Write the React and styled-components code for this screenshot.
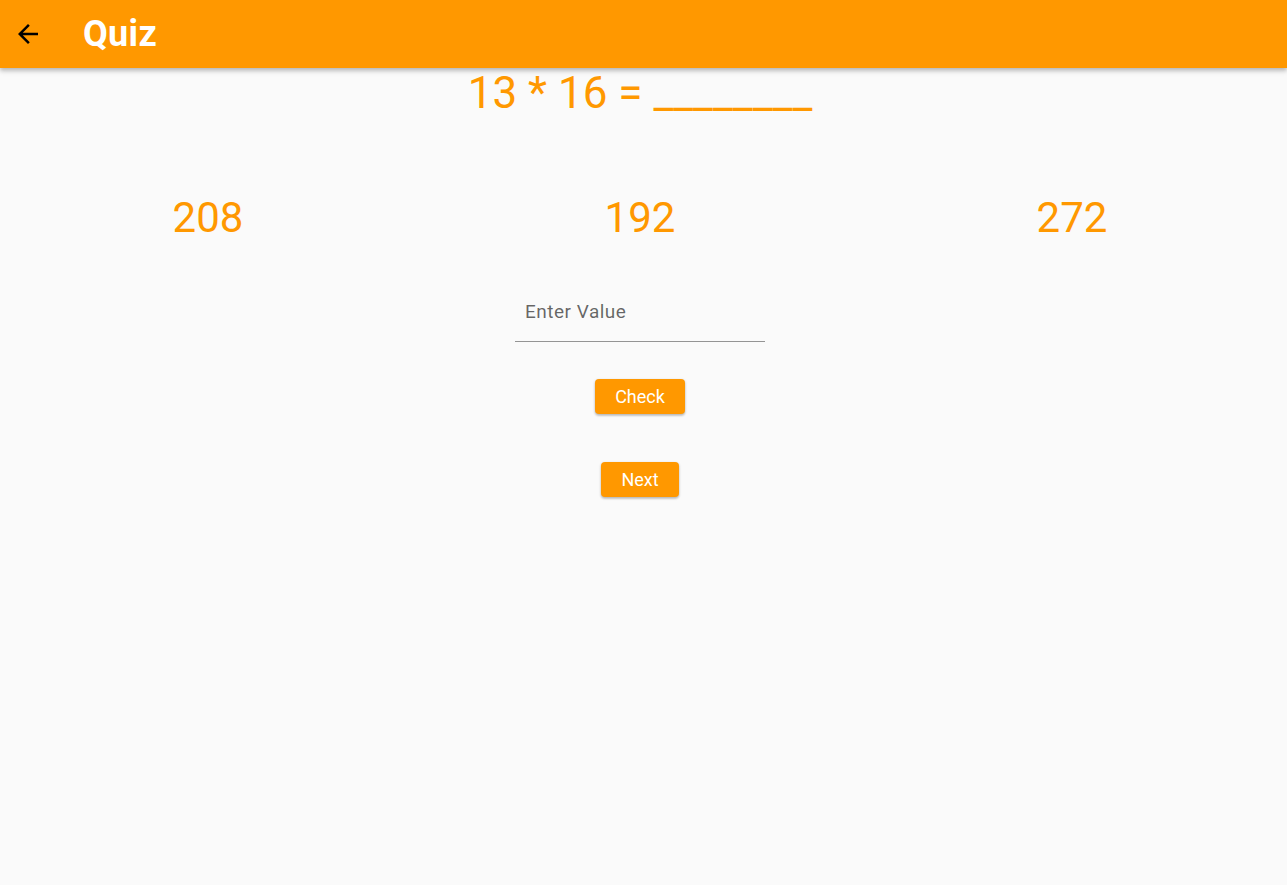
import React, { useState } from "react";
import styled, { createGlobalStyle } from "styled-components";

const GlobalStyle = createGlobalStyle`
  html, body {
    margin: 0;
    padding: 0;
    background: #fafafa;
    font-family: Roboto, "Noto Sans", Arial, sans-serif;
    overflow: hidden;
  }
`;

const ORANGE = "#ff9800";

const Page = styled.div`
  min-height: 100vh;
  background: #fafafa;
`;

const AppBar = styled.header`
  height: 68px;
  background: ${ORANGE};
  display: flex;
  align-items: center;
  box-shadow: 0 2px 4px rgba(0, 0, 0, 0.2), 0 4px 5px rgba(0, 0, 0, 0.1);
  position: relative;
  z-index: 1;
`;

const BackButton = styled.button`
  width: 30px;
  height: 30px;
  margin-left: 13px;
  padding: 0;
  border: none;
  background: transparent;
  display: flex;
  align-items: center;
  justify-content: center;
  cursor: pointer;
  svg {
    display: block;
  }
`;

const Title = styled.h1`
  margin: 0 0 0 40px;
  font-size: 36px;
  font-weight: 700;
  color: #fff;
  line-height: 1;
  letter-spacing: 0.3px;
`;

const Body = styled.main`
  padding-right: 7px;
  display: flex;
  flex-direction: column;
  align-items: center;
`;

const Question = styled.div`
  font-size: 44px;
  line-height: 51px;
  color: ${ORANGE};
  text-align: center;
`;

const Options = styled.div`
  width: 100%;
  margin-top: 75px;
  display: grid;
  grid-template-columns: repeat(3, 1fr);
  column-gap: 16px;
`;

const Option = styled.div`
  text-align: center;
  font-size: 42px;
  line-height: 47px;
  color: ${ORANGE};
`;

const Field = styled.input`
  margin-top: 60px;
  width: 250px;
  box-sizing: border-box;
  padding: 0 10px 18px;
  border: none;
  border-bottom: 1px solid #949494;
  background: transparent;
  font-family: inherit;
  font-size: 19px;
  line-height: 22px;
  letter-spacing: 0.5px;
  color: #222;
  outline: none;
  &::placeholder {
    color: rgba(0, 0, 0, 0.6);
  }
`;

const Button = styled.button`
  margin-top: ${({ $gap }) => $gap}px;
  height: 35px;
  padding: 0 20px;
  border: none;
  border-radius: 4px;
  background: ${ORANGE};
  color: #fff;
  font-family: inherit;
  font-size: 18px;
  font-weight: 400;
  cursor: pointer;
  box-shadow: 0 1px 3px rgba(0, 0, 0, 0.2), 0 2px 2px rgba(0, 0, 0, 0.12);
`;

function ArrowBack() {
  return (
    <svg width="30" height="30" viewBox="0 0 24 24" fill="#000">
      <path d="M20 11H7.83l5.59-5.59L12 4l-8 8 8 8 1.41-1.41L7.83 13H20v-2z" />
    </svg>
  );
}

export default function App() {
  const [value, setValue] = useState("");
  const options = [208, 192, 272];

  return (
    <Page>
      <GlobalStyle />
      <AppBar>
        <BackButton aria-label="Back">
          <ArrowBack />
        </BackButton>
        <Title>Quiz</Title>
      </AppBar>
      <Body>
        <Question>13 * 16 = ________</Question>
        <Options>
          {options.map((n) => (
            <Option key={n}>{n}</Option>
          ))}
        </Options>
        <Field
          placeholder="Enter Value"
          value={value}
          onChange={(e) => setValue(e.target.value)}
        />
        <Button $gap={37}>Check</Button>
        <Button $gap={48}>Next</Button>
      </Body>
    </Page>
  );
}
